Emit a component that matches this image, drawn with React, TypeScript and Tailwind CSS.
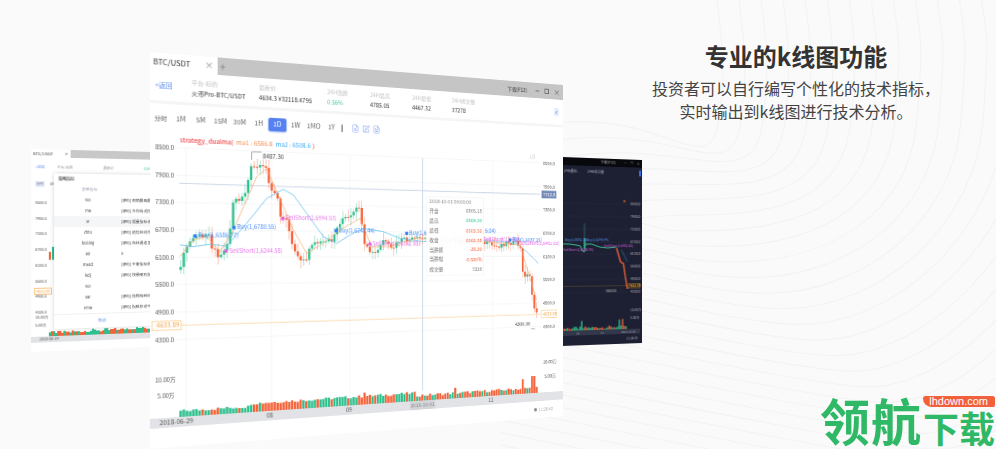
import React from "react";
import { FileSearch, SquarePen, FileText } from "lucide-react";

type P = [number, number];
type Quad = [P, P, P, P];

function homography(q: Quad, W: number, H: number) {
  const [[x0, y0], [x1, y1], [x2, y2], [x3, y3]] = q;
  const dx1 = x1 - x2, dx2 = x3 - x2, sx = x0 - x1 + x2 - x3;
  const dy1 = y1 - y2, dy2 = y3 - y2, sy = y0 - y1 + y2 - y3;
  const den = dx1 * dy2 - dx2 * dy1;
  const g = (sx * dy2 - dx2 * sy) / den;
  const h = (dx1 * sy - sx * dy1) / den;
  const a = x1 - x0 + g * x1, b = x3 - x0 + h * x3, c = x0;
  const d = y1 - y0 + g * y1, e = y3 - y0 + h * y3, f = y0;
  return { a: a / W, b: b / H, c, d: d / W, e: e / H, f, g: g / W, h: h / H };
}
function matrix(q: Quad, W: number, H: number) {
  const m = homography(q, W, H);
  return `matrix3d(${m.a},${m.d},0,${m.g},${m.b},${m.e},0,${m.h},0,0,1,0,${m.c},${m.f},0,1)`;
}

const MW = 470, MH = 397;
const mainQuad: Quad = [[150, 52], [563, 85], [563, 416], [150, 449]];
const M = homography(mainQuad, MW, MH);
function toLocal(x: number, y: number): P {
  const { a, b, c, d, e, f, g, h } = M;
  const A = e - f * h, B = c * h - b, C = b * f - c * e;
  const D = f * g - d, E = a - c * g, F = c * d - a * f;
  const G = d * h - e * g, H = b * g - a * h, I = a * e - b * d;
  const w = G * x + H * y + I;
  return [(A * x + B * y + C) / w, (D * x + E * y + F) / w];
}
function toScreen(u: number, v: number): P {
  const { a, b, c, d, e, f, g, h } = M;
  const w = g * u + h * v + 1;
  return [(a * u + b * v + c) / w, (d * u + e * v + f) / w];
}
// coordinates measured on the 3x crop of the chart
const Z = (zx: number, zy: number): P => toLocal(150 + zx / 3, 140 + zy / 3);
const rnd = (i: number) => {
  const s = Math.sin(i * 12.9898) * 43758.5453;
  return s - Math.floor(s);
};
function interp(pts: P[], x: number) {
  if (x <= pts[0][0]) return pts[0][1];
  for (let i = 1; i < pts.length; i++) {
    if (x <= pts[i][0]) {
      const t = (x - pts[i - 1][0]) / (pts[i][0] - pts[i - 1][0]);
      return pts[i - 1][1] + t * (pts[i][1] - pts[i - 1][1]);
    }
  }
  return pts[pts.length - 1][1];
}

const closeKeys: P[] = [[90, 380], [100, 350], [110, 320], [125, 300], [140, 285], [160, 295], [175, 270], [185, 320], [205, 345], [225, 330], [240, 270], [250, 180], [270, 178], [290, 150], [300, 85], [320, 82], [350, 85], [360, 140], [385, 180], [390, 235], [415, 230], [420, 300], [445, 350], [470, 365], [480, 310], [520, 310], [545, 300], [575, 235], [600, 235], [630, 195], [640, 315], [665, 340], [680, 340], [700, 300], [725, 330], [750, 300], [780, 300], [820, 295], [1005, 310], [1040, 320], [1075, 305], [1110, 315], [1118, 400], [1140, 410], [1150, 490], [1160, 525]];
const blueKeys: P[] = [[90, 315], [130, 320], [180, 313], [230, 318], [290, 250], [350, 175], [400, 148], [430, 165], [470, 220], [520, 290], [560, 310], [600, 285], [640, 265], [700, 275], [750, 295], [820, 305], [1005, 300], [1100, 310], [1130, 335], [1165, 370]];
const orangeKeys: P[] = [[90, 350], [130, 300], [170, 290], [210, 335], [250, 270], [290, 180], [320, 110], [350, 85], [400, 200], [430, 270], [470, 340], [520, 310], [570, 270], [630, 235], [665, 320], [720, 320], [800, 295], [1005, 305], [1110, 315], [1160, 480]];

const RED = "#f4633a", GREEN = "#2fbf8f";
const N = 133;
const u0 = Z(92, 300)[0], u1 = Z(1160, 300)[0];
const candles = Array.from({ length: N }, (_, i) => {
  const u = u0 + ((u1 - u0) * i) / (N - 1);
  const sx = toScreen(u, 200)[0];
  const zx = (sx - 150) * 3;
  const noise = (rnd(i + 1) - 0.5) * 16;
  const zy = interp(closeKeys, zx) + noise;
  return { u, sx, zx, v: toLocal(sx, 140 + zy / 3)[1] };
});
const bars = candles.map((c, i) => {
  const prev = i ? candles[i - 1].v : c.v + 3;
  const top = Math.min(prev, c.v), bot = Math.max(prev, c.v);
  const up = c.v < prev;
  let vol = 4.5 + rnd(i + 40) * 3 + (c.zx > 300 && c.zx < 800 ? 3 : 0);
  if (Math.abs(c.zx - 915) < 4) vol = 12;
  if (Math.abs(c.zx - 640) < 4) vol = 13;
  if (Math.abs(c.zx - 1118) < 4) vol = 17;
  if (Math.abs(c.zx - 1150) < 6) vol = 20;
  return { ...c, top, bot, up, hi: top - 2 - rnd(i + 80) * 7, lo: bot + 2 + rnd(i + 120) * 7, vol };
});
const linePts = (keys: P[]) => keys.map(([x, y]) => Z(x, y).map((n) => n.toFixed(1)).join(",")).join(" ");

const gridPrices = [22, 105, 187, 270, 352, 434, 517, 600];
const priceLabels = ["8500.0", "7900.0", "7300.0", "6700.0", "6100.0", "5500.0", "4900.0", "4300.0"];

function T({ z, c = "#555", s = 6, children, a }: { z: P; c?: string; s?: number; children: React.ReactNode; a?: "end" | "middle" }) {
  const [x, y] = Z(z[0], z[1]);
  return (
    <text x={x} y={y + s * 0.35} fill={c} fontSize={s} textAnchor={a}>
      {children}
    </text>
  );
}

function Chart() {
  const tt0 = Z(830, 170), tt1 = Z(1000, 405);
  const rows: [string, string, string, number][] = [
    ["开盘", "6805.18", "#777", 213], ["最高", "6864.00", GREEN, 243], ["最低", "6503.56", RED, 272], ["收盘", "6566.88", RED, 301],
    ["当跌额", "-38.30", RED, 329], ["当跌幅", "-0.580%", RED, 358], ["成交量", "7329", "#777", 388],
  ];
  const marks: [number, number, string, string][] = [
    [135, 288, "Buy(1,6586.77)", "#2f7df6"], [252, 263, "Buy(1,6780.55)", "#2f7df6"], [228, 333, "SellShort(1,6244.58)", "#e35fe8"],
    [398, 236, "SellShort(1,6994.53)", "#e35fe8"], [558, 272, "Buy(1,6248.44)", "#2f7df6"], [660, 312, "SellShort(1,6242.88)", "#e35fe8"],
    [770, 280, "Buy(1,6", "#2f7df6"],
  ];
  const axisX = [108, 365, 600, 1027];
  const vl = Z(818, 300)[0];
  return (
    <svg className="block w-full flex-1" viewBox={`0 80 ${MW} 317`} preserveAspectRatio="none">
      {gridPrices.map((y) => {
        const [, v] = Z(60, y);
        return <line key={y} x1={26} x2={440} y1={v} y2={v} stroke="#f1f2f4" strokeWidth={0.7} />;
      })}
      {axisX.map((x) => {
        const u = toLocal(150 + x / 3, 250)[0];
        return <line key={x} x1={u} x2={u} y1={95} y2={367} stroke="#f1f2f4" strokeWidth={0.7} />;
      })}
      <text x={Z(90, 6)[0]} y={Z(90, 6)[1]} fontSize={6.3} fontWeight={500}>
        <tspan fill="#f0484e">strategy_dualma(</tspan>
        <tspan fill="#f7a36b" dx={3}>ma1 : 6586.8</tspan>
        <tspan fill="#5bb8f5" dx={3}>ma2 : 6508.6</tspan>
        <tspan fill="#f0484e" dx={2}>)</tspan>
      </text>
      {gridPrices.map((y, i) => {
        const [, v] = Z(60, y);
        return (
          <g key={y} fontSize={5.9} fill="#555">
            <text x={5} y={v + 2.2}>{priceLabels[i]}</text>
            <text x={443} y={v + 2.2} fontSize={5.2}>{priceLabels[i]}</text>
          </g>
        );
      })}
      <line x1={Z(88, 130)[0]} y1={Z(88, 130)[1]} x2={Z(1170, 163)[0]} y2={Z(1170, 163)[1]} stroke="#cfd8e8" strokeWidth={1.1} />
      <line x1={26} y1={Z(90, 556)[1]} x2={442} y2={Z(90, 556)[1]} stroke="#fbd9a8" strokeWidth={0.9} />
      <rect x={2} y={Z(90, 556)[1] - 4.5} width={28} height={9} fill="#fff" stroke="#fbc57f" strokeWidth={0.7} />
      <text x={6} y={Z(90, 556)[1] + 2.2} fontSize={6.2} fill="#f3a84f">4633.89</text>
      <rect x={441} y={Z(1172, 522)[1] - 4.5} width={20} height={9} fill="#fff" stroke="#fbc57f" strokeWidth={0.7} />
      <text x={443} y={Z(1172, 522)[1] + 2} fontSize={5.2} fill="#f3a84f">4633.89</text>
      <rect x={441} y={Z(1172, 163)[1] - 4.5} width={20} height={9} fill="#7189b8" />
      <text x={443} y={Z(1172, 163)[1] + 2} fontSize={5.4} fill="#fff">7712.8</text>
      <line x1={vl} x2={vl} y1={95} y2={356} stroke="#b9c8ea" strokeWidth={0.7} />

      {bars.map((b, i) => (
        <g key={i} fill={b.up ? GREEN : RED}>
          <rect x={b.u - 0.25} y={b.hi} width={0.5} height={b.lo - b.hi} opacity={0.75} />
          <rect x={b.u - 1.2} y={b.top} width={2.4} height={Math.max(b.bot - b.top, 1)} />
          <rect x={b.u - 1.25} y={367 - b.vol} width={2.5} height={b.vol} />
        </g>
      ))}
      <polyline points={linePts(blueKeys)} fill="none" stroke="#62bff0" strokeWidth={0.8} strokeLinejoin="round" />
      <polyline points={linePts(orangeKeys)} fill="none" stroke="#f5a66b" strokeWidth={0.7} strokeLinejoin="round" />

      {marks.map(([x, y, t, c]) => {
        const [u, v] = Z(x, y);
        return (
          <g key={t}>
            <rect x={u - 1.7} y={v - 1.7} width={3.4} height={3.4} fill={c} />
            <text x={u + 3} y={v + 1.5} fontSize={5.9} fill={c} opacity={0.85}>{t}</text>
          </g>
        );
      })}

      <polyline points={linePts([[305, 60], [305, 36], [335, 36]])} fill="none" stroke="#555" strokeWidth={0.5} />
      <T z={[338, 50]} c="#444" s={6.2}>8487.30</T>
      <T z={[1095, 552]} c="#444" s={5.6}>4300.00</T>
      <polyline points={linePts([[1143, 566], [1155, 566]])} fill="none" stroke="#555" strokeWidth={0.5} />
      <T z={[1147, 52]} c="#ccc" s={5.5} a="middle">1D</T>
      <T z={[1005, 272]} c="#2f7df6" s={6}>6.04)</T>
      <T z={[1000, 300]} c="#e35fe8" s={6}>SellShort(1,6602)</T>
      <rect x={Z(1080, 300)[0] - 1.7} y={Z(1080, 300)[1] - 1.7} width={3.4} height={3.4} fill="#2f7df6" />
      <T z={[1088, 300]} c="#2f7df6" s={5.6}>Buy(1,6037.15)</T>
      <T z={[1110, 310]} c="#e35fe8" s={5.6}>SellShort(1,6451.62)</T>

      <rect x={tt0[0]} y={tt0[1]} width={tt1[0] - tt0[0]} height={tt1[1] - tt0[1]} fill="#fff" fillOpacity={0.95} stroke="#eef0f2" strokeWidth={0.6} />
      <T z={[838, 183]} c="#888" s={5.6}>2018-10-01 00:00:00</T>
      {rows.map(([k, val, c, y]) => (
        <g key={k}>
          <T z={[838, y]} c="#777" s={5.6}>{k}</T>
          <T z={[996, y]} c={c} s={5.6} a="end">{val}</T>
        </g>
      ))}

      <text x={5} y={331.5} fontSize={5.6} fill="#555">10.00万</text>
      <text x={7} y={347.5} fontSize={5.6} fill="#555">5.00万</text>
      <text x={443} y={333} fontSize={5.2} fill="#555">10.00万</text>
      <text x={445} y={350} fontSize={5.2} fill="#555">5.00万</text>
      <rect x={0} y={367} width={MW} height={10} fill="#e2e3e6" />
      <text x={9} y={374} fontSize={6.4} fill="#555">2018-06-29</text>
      <text x={toLocal(270, 250)[0]} y={374} fontSize={6} fill="#555" textAnchor="middle">08</text>
      <text x={toLocal(349, 250)[0]} y={374} fontSize={6} fill="#555" textAnchor="middle">09</text>
      <rect x={vl - 15} y={367} width={30} height={10} fill="#d4d5d9" />
      <text x={vl} y={374} fontSize={5.6} fill="#888" textAnchor="middle">2018-10-01</text>
      <text x={toLocal(491, 250)[0]} y={374} fontSize={6} fill="#555" textAnchor="middle">11</text>
      <circle cx={433} cy={387} r={2} fill="#888" />
      <text x={437} y={389} fontSize={5} fill="#aaa">11:26:42</text>
    </svg>
  );
}

function StatCol({ w, label, value, vc = "#333" }: { w: string; label: string; value: string; vc?: string }) {
  return (
    <div className={`flex flex-col gap-[4px] ${w}`}>
      <span className="text-[6px] leading-[7px] text-[#c4c4c4]">{label}</span>
      <span className="text-[6.2px] leading-[8px] whitespace-nowrap" style={{ color: vc }}>{value}</span>
    </div>
  );
}

function MainWindow() {
  const tabs = ["1M", "5M", "15M", "30M", "1H", "1D", "1W", "1MO", "1Y"];
  return (
    <div
      className="absolute left-0 top-0 flex h-[397px] w-[470px] origin-top-left flex-col bg-white blur-[0.65px]"
      style={{ transform: matrix(mainQuad, MW, MH) }}
    >
      <div className="flex h-[18px] items-center bg-[#c5c5c5]">
        <div className="flex h-full w-[66px] items-center justify-between bg-white pl-[3px] pr-[4px] text-[7.5px] text-[#333]">
          <span>BTC/USDT</span>
          <span className="text-[9px] text-[#888]">×</span>
        </div>
        <span className="ml-[2px] text-[11px] leading-none text-[#888]">+</span>
        <span className="ml-auto text-[6px] text-[#333]">下载(F12)</span>
        <span className="ml-[11px] h-px w-[5px] bg-[#666]" />
        <span className="ml-[7px] h-[6px] w-[6px] border border-[#666]" />
        <span className="ml-[6px] mr-[4px] text-[9px] leading-none text-[#666]">×</span>
      </div>
      <div className="flex h-[33px] items-center border-b-[3px] border-[#f5f5f6] pl-[5px]">
        <span className="w-[35px] text-[6.5px] text-[#5b8def]">&lt;返回</span>
        <StatCol w="w-[68px]" label="平台-标的" value="火币Pro-BTC/USDT" />
        <StatCol w="w-[73px]" label="最新价" value="4634.3 ¥32118.4795" />
        <StatCol w="w-[48px]" label="24H涨跌" value="0.56%" vc="#4fc9a0" />
        <StatCol w="w-[49px]" label="24H最高" value="4785.05" />
        <StatCol w="w-[48px]" label="24H最低" value="4467.32" />
        <StatCol w="w-[60px]" label="24H成交量" value="37278" />
        <span className="ml-auto mr-[6px] rounded-[1px] bg-[#e6edfb] px-[1px] text-[7px] leading-[10px] text-[#5b8def]">&lt;</span>
      </div>
      <div className="flex h-[29px] items-center pl-[0.5px]">
        <span className="flex h-[14px] w-[19.5px] items-center justify-center text-[6px] text-[#555]">分时</span>
        {tabs.map((t) => (
          <span
            key={t}
            className={
              t === "1D"
                ? "flex h-[14px] w-[19.5px] items-center justify-center rounded-[2px] bg-[#5681f0] text-[7px] text-white shadow-[0_1px_2px_rgba(86,129,240,0.5)]"
                : "flex h-[14px] w-[19.5px] items-center justify-center text-[7px] text-[#666]"
            }
          >
            {t}
          </span>
        ))}
        <span className="ml-[1px] h-[8px] w-[1px] bg-[#444]" />
        <FileSearch className="ml-[10px] text-[#7d9cf0]" size={9} strokeWidth={1.4} />
        <SquarePen className="ml-[3px] text-[#7d9cf0]" size={9} strokeWidth={1.4} />
        <FileText className="ml-[3px] text-[#7d9cf0]" size={9} strokeWidth={1.4} />
      </div>
      <Chart />
    </div>
  );
}

function LeftWindow() {
  const rows: [string, string][] = [
    ["vol", "[源码] 周期最高最低成交"], ["ma", "[源码] 多均线 趋势策略"], ["sr", "[源码] 超量指标 趋势"], ["zhtu", "[源码] 趋势转向均线"],
    ["boiling", "[源码] 布林通道 策略"], ["atr", "0"], ["macd", "[源码] 平衡指标移动"], ["kdj", "[源码] 快慢随机指标"],
    ["vol", ""], ["sar", "[源码] 抛物线转向"], ["ema", "[源码] 指数移动平均"],
  ];
  const labels = ["8500.0", "7900.0", "7300.0", "6700.0", "6100.0", "5500.0", "4900.0", "4300.0"];
  const q: Quad = [[31, 149], [191, 153], [191, 345], [31, 352]];
  return (
    <div
      className="absolute left-0 top-0 flex h-[203px] w-[160px] origin-top-left flex-col bg-white blur-[0.75px]"
      style={{ transform: matrix(q, 160, 203) }}
    >
      <div className="flex h-[8px] items-center bg-[#c8c8c8]">
        <div className="flex h-full w-[38px] items-center justify-between bg-white px-[2px] text-[4px] text-[#444]">
          <span>BTC/USDT</span><span>×</span>
        </div>
      </div>
      <div className="flex h-[20px] items-center gap-[12px] px-[4px] text-[3.5px] text-[#999]">
        <span className="text-[#5b8def]">&lt;返回</span>
        <span>平台-标的</span>
        <span className="ml-[18px]">最新价</span>
        <span className="ml-[18px] text-[#4fc9a0]">0.56%</span>
      </div>
      <div className="flex h-[14px] items-center gap-[5px] px-[4px] text-[3.5px] text-[#667]">
        <span className="bg-[#e6edfb] px-[1px]">分时</span><span>5M</span>
      </div>
      <div className="flex flex-1 flex-col justify-between px-[4px] pb-[36px] pt-[9px] text-[3.6px] leading-[6px] text-[#555]">
        {labels.map((l) => <span key={l}>{l}</span>)}
      </div>
      <div className="absolute left-[3px] top-[139px] border border-[#fbc57f] px-[1px] text-[3.6px] leading-[5px] text-[#f3a84f]">4633.89</div>
      <div className="absolute left-[4px] top-[166px] flex flex-col gap-[3px] text-[3.6px] leading-[5px] text-[#555]">
        <span>10.00万</span><span>5.00万</span>
      </div>
      <div className="absolute left-[17px] top-[95px] flex h-[16px] items-end gap-[1px]">
        <span className="h-[8px] w-[2px] bg-[#f4633a]" />
        <span className="h-[13px] w-[2px] bg-[#2fbf8f]" />
        <span className="h-[16px] w-[2px] bg-[#2fbf8f]" />
      </div>
      <div className="absolute bottom-[9px] left-0 flex h-[6px] w-full items-center bg-[#e2e3e6] pl-[8px] text-[3.6px] text-[#555]">2018-06-29</div>
      <div className="absolute bottom-[15px] left-[17px] flex h-[6px] items-end gap-[0.5px]">
        {Array.from({ length: 60 }, (_, i) => (
          <span
            key={i}
            className={rnd(i + 5) > 0.5 ? "w-[1.5px] bg-[#f4633a]" : "w-[1.5px] bg-[#2fbf8f]"}
            style={{ height: 2 + rnd(i + 9) * 3 + i * 0.03 }}
          />
        ))}
      </div>
      <div className="absolute left-[22px] top-[24px] flex h-[157px] w-[130px] flex-col bg-white text-[3.8px] text-[#444] shadow-[0_0_4px_rgba(0,0,0,0.18)]">
        <div className="flex h-[10px] items-center pl-[4px] text-[4px] text-[#222]">策略指标</div>
        <div className="flex h-[11px] items-center pl-[27px] text-[#aab]">策略指标</div>
        {rows.map(([k, d], i) => (
          <div key={i} className={i === 2 ? "flex h-[11px] items-center bg-[#f5f6f8]" : "flex h-[11px] items-center"}>
            <span className="w-[66px] text-center">{k}</span>
            <span className="whitespace-nowrap">{d}</span>
          </div>
        ))}
        <div className="flex flex-1 items-center justify-center border-t border-[#f1f1f1] pr-[36px] text-[#5b8def]">取消</div>
      </div>
    </div>
  );
}

function DarkWindow() {
  const labels = ["8500.0", "7900.0", "7300.0", "6700.0", "6100.0", "5500.0", "4900.0", "4300.0"];
  const q: Quad = [[562, 157], [642, 160], [642, 343], [562, 346]];
  return (
    <div
      className="absolute left-0 top-0 flex h-[189px] w-[80px] origin-top-left flex-col bg-[#1d2032] blur-[0.6px]"
      style={{ transform: matrix(q, 80, 189) }}
    >
      <div className="flex h-[8px] items-center justify-end gap-[3px] bg-[#08090d] pr-[2px] text-[3.6px] text-[#aaa]">
        <span>下载(F12)</span><span className="ml-[5px]">－</span><span>□</span><span>×</span>
      </div>
      <div className="flex h-[12px] items-center gap-[10px] pl-[2px] text-[3.4px] text-[#aab]">
        <span>24H最低</span><span>24H成交量</span>
        <span className="ml-auto mr-[1px] h-[6px] w-[2px] bg-[#3f6fe0]" />
      </div>
      <svg className="block flex-1" viewBox="563 177 80 169" preserveAspectRatio="none">
        {[203, 216, 229, 242, 254, 267, 280, 293].map((y, i) => (
          <g key={y}>
            <line x1={563} x2={630} y1={y} y2={y} stroke="#282c40" strokeWidth={0.5} />
            <text x={631} y={y + 1.3} fontSize={3.4} fill="#aab">{labels[i]}</text>
          </g>
        ))}
        <line x1={563} x2={630} y1={286.5} y2={286.5} stroke="#5d4a2c" strokeWidth={0.6} />
        <rect x={629} y={284.5} width={12} height={4.5} fill="#3a2c18" stroke="#c98a35" strokeWidth={0.4} />
        <text x={630} y={288} fontSize={3.2} fill="#e9a84f">4633.89</text>
        <circle cx={625} cy={200} r={1.2} fill="#a5582c" />
        <polyline points="563,244 570,244 577,245 581,246 583,251 585,252 586,244 592,244 600,247 608,248 617,247" fill="none" stroke="#3fb58f" strokeWidth={1} />
        <line x1={585} x2={585} y1={223} y2={250} stroke="#2f8f76" strokeWidth={0.6} />
        <rect x={584.3} y={238} width={1.6} height={10} fill="#33b592" />
        <polyline points="617,248 621,262 624,264 626,278 628,290" fill="none" stroke="#f4633a" strokeWidth={1.3} />
        <polyline points="622,250 628,262" fill="none" stroke="#2a6da8" strokeWidth={0.7} />
        <text x={566} y={241} fontSize={3.2} fill="#4d8df0">Buy(1,6051.15)</text>
        <text x={587} y={241} fontSize={3.2} fill="#4d8df0">Buy(1,6248.44)</text>
        <text x={564} y={251} fontSize={3.2} fill="#d65fe0">SellShort(1,6242.88)</text>
        <text x={604} y={247} fontSize={3.2} fill="#d65fe0">SellShort(1,6451.62)</text>
        <text x={606} y={293} fontSize={3} fill="#bbb">4300.00</text>
        <text x={631} y={313} fontSize={3.2} fill="#aab">10.00万</text>
        <text x={631} y={321} fontSize={3.2} fill="#aab">5.00万</text>
        {Array.from({ length: 38 }, (_, i) => {
          const h = 1 + rnd(i + 3) * 3 + (i === 11 ? 6 : 0) + (i === 33 ? 6 : 0) + (i === 35 ? 8 : 0);
          return <rect key={i} x={563 + i * 1.7} y={331 - h} width={1.3} height={h} fill={rnd(i + 17) > 0.5 ? "#f4633a" : "#2fbf8f"} />;
        })}
        <rect x={563} y={331} width={78} height={5} fill="#33374a" />
        <text x={577} y={335} fontSize={2.8} fill="#aab">10</text>
        <text x={601} y={335} fontSize={2.8} fill="#aab">11</text>
        <text x={622} y={335} fontSize={2.8} fill="#aab">2018-11-20</text>
        <text x={627} y={342} fontSize={3} fill="#aab">11:26:42</text>
      </svg>
    </div>
  );
}

function Backdrop() {
  const lines = Array.from({ length: 29 }, (_, i) => i - 9);
  return (
    <svg className="absolute inset-0" width={996} height={449} fill="none">
      {lines.map((k) => {
        const ys = 248 + k * 12.5;
        const lx = 733 + 17 * k, ly = 262 + 15.6 * k;
        const tx = 917 + 22 * k;
        const head =
          k < -2
            ? `M${lx - 130} ${ly + 22} C ${lx - 90} ${ly + 12}, ${lx - 45} ${ly}, ${lx} ${ly}`
            : `M500 ${ys - 28} C 560 ${ys - 16}, 600 ${ys - 8}, 640 ${ys} S ${lx - 45} ${ly}, ${lx} ${ly}`;
        const d = `${head} C ${lx + 95} ${ly}, ${tx - 8} ${215 + k * 4}, ${tx} 120 S ${tx + 2} 40, ${tx - 4} -20`;
        return <path key={k} d={d} stroke="#f3f3f3" strokeWidth={1.1} />;
      })}
    </svg>
  );
}

export default function App() {
  return (
    <div className="relative flex h-[449px] w-[996px] justify-end overflow-hidden bg-[#fafafa] font-['Noto_Sans_CJK_SC',Roboto,sans-serif]">
      <Backdrop />
      <DarkWindow />
      <LeftWindow />
      <MainWindow />
      <div className="relative flex h-fit w-[400px] flex-col items-center pt-[40px]">
        <h1 className="text-[24px] font-bold leading-[32px] text-[#333]">专业的k线图功能</h1>
        <p className="mt-[5px] text-center text-[16px] leading-[23px] text-[#444]">
          投资者可以自行编写个性化的技术指标，
          <br />
          实时输出到k线图进行技术分析。
        </p>
      </div>
      <div className="absolute bottom-0 right-[1px] flex items-end font-bold text-[#2fb866]">
        <span className="mb-[1px] text-[50px] leading-[58px] tracking-[1px]">领航</span>
        <span className="mb-[2px] ml-[1px] text-[36px] leading-[40px]">下载</span>
        <span className="absolute right-0 top-[6px] flex h-[11px] w-[72px] items-center justify-end rounded-bl-[10px] rounded-tl-[3px] rounded-r-[3px] bg-[#f2603c] pr-[7px] font-['Liberation_Sans',sans-serif] text-[11px] font-normal leading-none text-white">
          lhdown.com
        </span>
      </div>
    </div>
  );
}
